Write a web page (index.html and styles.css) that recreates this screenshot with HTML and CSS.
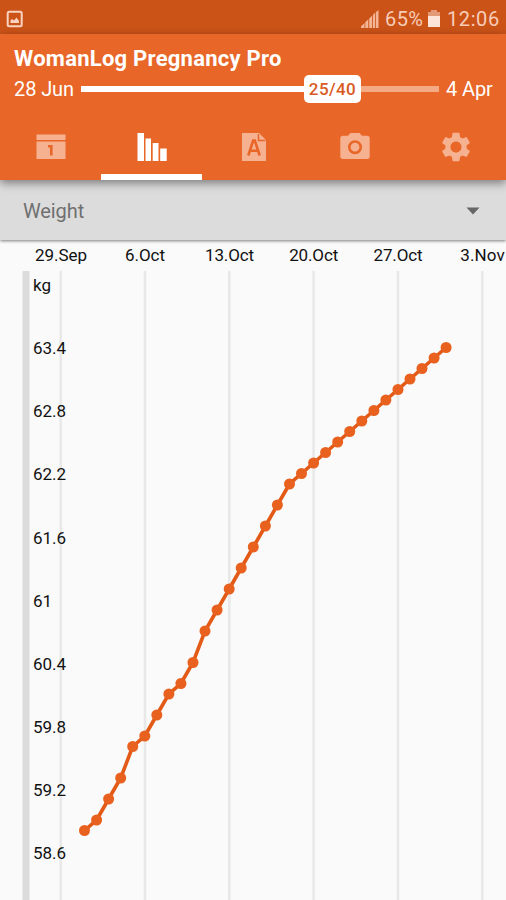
FILE: index.html
```html
<!DOCTYPE html>
<html lang="en">
<head>
    <meta charset="UTF-8">
    <meta name="viewport" content="width=device-width, initial-scale=1.0">
    <title>WomanLog Pregnancy Pro</title>
    <link rel="stylesheet" href="styles.css">
</head>
<body>
    <div class="status-bar">
        <svg class="picture" width="18" height="18" viewBox="0 0 18 18">
            <rect x="1.7" y="1.7" width="14" height="14.6" rx="1.5" fill="none" stroke="#f9d3c0" stroke-width="2"/>
            <path d="M4.5 13V10.5L6 9L8 10.5L10.5 7.5L13 11V13Z" fill="#f9d3c0"/>
        </svg>
        <svg class="signal" width="18" height="18" viewBox="0 0 18 18">
            <path d="M0 18V16.5L3.5 13V18ZM4.3 18V12.2L7.3 9.2V18ZM8.2 18V8.5L11.2 5.5V18ZM12 18V4.8L14 2.8V18ZM14.8 18V2.2L17.5 0V18Z" fill="#f4b597"/>
        </svg>
        <span class="percent">65%</span>
        <svg class="battery" width="12" height="17" viewBox="0 0 12 17">
            <path d="M3 0H9V2H12V6H0V2H3Z" fill="#e49a76"/>
            <path d="M0 6H12V17H0Z" fill="#fde5d9"/>
        </svg>
        <span class="clock">12:06</span>
    </div>

    <div class="header">
        <h1>WomanLog Pregnancy Pro</h1>
        <div class="progress">
            <span class="start">28 Jun</span>
            <div class="line done"></div>
            <span class="week">25/40</span>
            <div class="line left"></div>
            <span class="end">4 Apr</span>
        </div>
        <div class="tabs">
            <div class="tab">
                <svg width="30" height="30" viewBox="0 0 30 30">
                    <path d="M.5 2.5H29.5V8H.5ZM.5 9.5H29.5V27H.5Z"/>
                    <path class="cut" d="M12 14.3H15.3V23.5"/>
                </svg>
            </div>
            <div class="tab active">
                <svg width="30" height="30" viewBox="0 0 30 30">
                    <path d="M0.5 1H7V29H0.5ZM8.5 6.5H14V29H8.5ZM15.7 11H21.5V29H15.7ZM23.2 16.5H29.7V29H23.2Z"/>
                </svg>
            </div>
            <div class="tab">
                <svg width="30" height="30" viewBox="0 0 30 30">
                    <path d="M3 1H20L27 8V29H3Z"/>
                    <path class="cut thin" d="M19.5 2V8.5H26.5"/>
                    <path class="cut" d="M9.3 23.5L14.2 8.5H15.8L20.7 23.5M11.2 18.8H18.8"/>
                </svg>
            </div>
            <div class="tab">
                <svg width="30" height="30" viewBox="0 0 30 30">
                    <path d="M10.5 1H19.5L22 3.7H27Q29.7 3.7 29.7 6.4V24.3Q29.7 27 27 27H3Q.3 27 .3 24.3V6.4Q.3 3.7 3 3.7H8Z"/>
                    <circle class="cut" cx="15" cy="15.2" r="5.7"/>
                </svg>
            </div>
            <div class="tab">
                <svg width="34" height="34" viewBox="0 0 24 24">
                    <path d="M19.43 12.98c.04-.32.07-.64.07-.98s-.03-.66-.07-.98l2.11-1.65c.19-.15.24-.42.12-.64l-2-3.46c-.12-.22-.39-.3-.61-.22l-2.49 1c-.52-.4-1.08-.73-1.69-.98l-.38-2.65C14.46 2.18 14.25 2 14 2h-4c-.25 0-.46.18-.49.42l-.38 2.65c-.61.25-1.17.59-1.69.98l-2.49-1c-.23-.09-.49 0-.61.22l-2 3.46c-.13.22-.07.49.12.64l2.11 1.65c-.04.32-.07.65-.07.98s.03.66.07.98l-2.11 1.65c-.19.15-.24.42-.12.64l2 3.46c.12.22.39.3.61.22l2.49-1c.52.4 1.08.73 1.69.98l.38 2.65c.03.24.24.42.49.42h4c.25 0 .46-.18.49-.42l.38-2.65c.61-.25 1.17-.59 1.69-.98l2.49 1c.23.09.49 0 .61-.22l2-3.46c.12-.22.07-.49-.12-.64l-2.11-1.65zM12 15.9c-2.15 0-3.9-1.75-3.9-3.9s1.75-3.9 3.9-3.9 3.9 1.75 3.9 3.9-1.75 3.9-3.9 3.9z"/>
                </svg>
            </div>
        </div>
    </div>

    <div class="select">
        <span>Weight</span>
        <svg width="14" height="8" viewBox="0 0 14 8"><path d="M.5.5H13.5L7 7.5Z" fill="#666"/></svg>
    </div>

    <svg class="chart" width="506" height="660" viewBox="0 240 506 660">
        <defs>
            <marker id="dot" markerUnits="userSpaceOnUse" markerWidth="12" markerHeight="12" refX="6" refY="6">
                <circle cx="6" cy="6" r="5.5" fill="#e8611f"/>
            </marker>
        </defs>
        <rect x="22.5" y="271" width="7" height="629" fill="#dcdcdc"/>
        <path class="grid" d="M60.7 271V900M145 271V900M229.3 271V900M313.6 271V900M398 271V900M482.3 271V900"/>
        <g class="dates">
            <text x="61" y="261" textLength="52">29.Sep</text>
            <text x="145" y="261" textLength="40">6.Oct</text>
            <text x="229.5" y="261" textLength="49">13.Oct</text>
            <text x="313.7" y="261" textLength="49">20.Oct</text>
            <text x="398" y="261" textLength="49">27.Oct</text>
            <text x="482.5" y="261" textLength="44.5">3.Nov</text>
        </g>
        <g class="weights">
            <text x="33" y="291">kg</text>
            <text x="33" y="354">63.4</text>
            <text x="33" y="417">62.8</text>
            <text x="33" y="480">62.2</text>
            <text x="33" y="543.5">61.6</text>
            <text x="33" y="606.5">61</text>
            <text x="33" y="669.5">60.4</text>
            <text x="33" y="732.5">59.8</text>
            <text x="33" y="795.5">59.2</text>
            <text x="33" y="858.5">58.6</text>
        </g>
        <polyline class="curve" points="84.5,830.5 96.6,820 108.6,799 120.7,778 132.7,746.5 144.8,736 156.8,715 168.9,694 180.9,683.5 193,662.5 205,631 217.1,610 229.2,589 241.2,568 253.3,547 265.4,526 277.4,505 289.5,484 301.5,473.5 313.6,463 325.6,452.5 337.7,442 349.7,431.5 361.8,421 373.9,410.5 385.9,400 398,389.5 410,379 422,368.5 434.1,358 446.1,347.5"/>
    </svg>
</body>
</html>
```
FILE: styles.css
```css
body {
    margin: 0;
    width: 506px;
    height: 900px;
    overflow: hidden;
    background-color: #fafafa;
    font-family: Roboto, sans-serif;
}
.status-bar {
    display: flex;
    align-items: center;
    height: 34px;
    box-sizing: border-box;
    padding: 3px 7px 0 6px;
    background-color: #cb5318;
    color: #f8cdb8;
    font-size: 20px;
}
.signal {
    margin-left: auto;
    margin-right: 6px;
}
.percent {
    width: 38px;
    margin-right: 5px;
    letter-spacing: 0.4px;
}
.battery {
    margin-right: 7px;
}
.clock {
    width: 52px;
    letter-spacing: 0.6px;
}
.header {
    position: relative;
    height: 146px;
    background-color: #e86628;
    color: #fff;
    box-shadow: 0 3px 9px rgba(0, 0, 0, 0.45);
}
h1 {
    margin: 0;
    padding: 10px 15px 0 14px;
    font-size: 22px;
    line-height: 30px;
    font-weight: 700;
    letter-spacing: 0.25px;
}
.progress {
    display: flex;
    align-items: center;
    height: 30px;
    padding: 0 13px 0 14px;
    font-size: 20px;
    line-height: 32px;
}
.start {
    width: 67px;
    letter-spacing: -0.1px;
}
.end {
    width: 47px;
    margin-left: 7px;
    white-space: nowrap;
    letter-spacing: -0.1px;
}
.line {
    height: 6px;
    margin-top: -1px;
    background-color: #fff;
}
.done {
    flex: 1;
}
.left {
    width: 78px;
    background-color: #f5aa86;
}
.week {
    width: 57px;
    height: 28px;
    line-height: 29px;
    border-radius: 5px;
    background-color: #fff;
    color: #d95a22;
    text-align: center;
    font-size: 17px;
    font-weight: 500;
    letter-spacing: 0.4px;
}
.tabs {
    display: flex;
    height: 76px;
}
.tab {
    flex: 1;
    display: flex;
    align-items: center;
    justify-content: center;
    box-sizing: border-box;
    padding-top: 15px;
    border-bottom: 6px solid transparent;
    fill: #f6b190;
}
.tab svg {
    margin-left: 1px;
}
.active {
    border-bottom-color: #fff;
    fill: #fff;
}
.cut {
    fill: none;
    stroke: #e86628;
    stroke-width: 2.6;
}
.thin {
    stroke-width: 1.5;
}
.select {
    display: flex;
    align-items: center;
    justify-content: space-between;
    height: 60px;
    box-sizing: border-box;
    padding: 2px 26px 0 23px;
    background-color: #dcdcdc;
    box-shadow: 0 1px 3px rgba(0, 0, 0, 0.5);
    color: #707070;
    font-size: 20px;
    letter-spacing: -0.1px;
}
.chart {
    display: block;
}
.chart text {
    font-size: 17px;
    fill: #111;
}
.dates text {
    text-anchor: middle;
}
.grid {
    stroke: #e8e8e8;
    stroke-width: 2.5;
}
.curve {
    fill: none;
    stroke: #e35a17;
    stroke-width: 3.6;
    marker-start: url(#dot);
    marker-mid: url(#dot);
    marker-end: url(#dot);
}
```
